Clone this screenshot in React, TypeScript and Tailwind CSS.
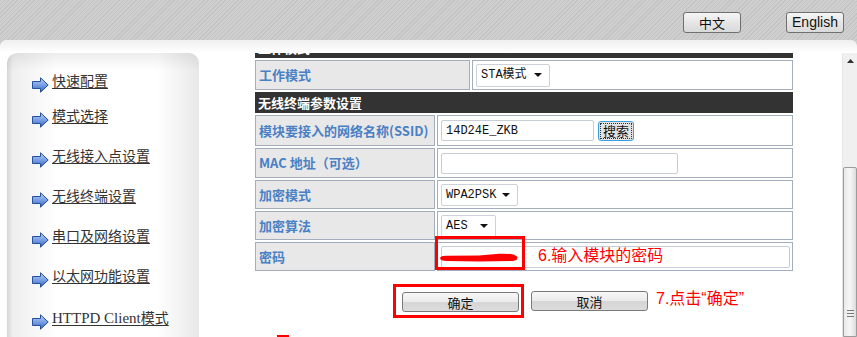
import type { ReactNode } from 'react'

const menu = [
  { label: '快速配置', cls: 'mt-[19px]' },
  { label: '模式选择', cls: 'mt-[19px]' },
  { label: '无线接入点设置', cls: 'mt-[24px]' },
  { label: '无线终端设置', cls: 'mt-[24px]' },
  { label: '串口及网络设置', cls: 'mt-[24px]' },
  { label: '以太网功能设置', cls: 'mt-[24px]' },
]

function Arrow() {
  return (
    <svg width="17" height="16" viewBox="0 0 17 16" className="mt-[5px] shrink-0">
      <defs>
        <linearGradient id="arrowFill" x1="0" y1="0" x2="0" y2="1">
          <stop offset="0" stopColor="#b9d0f5" />
          <stop offset="0.5" stopColor="#7aa0e3" />
          <stop offset="1" stopColor="#3563c2" />
        </linearGradient>
      </defs>
      <path d="M0.5 4.5H8.5V0.8L16.2 8L8.5 15.2V11.5H0.5Z" fill="url(#arrowFill)" stroke="#24509f" />
    </svg>
  )
}

function TopButton({ className, children }: { className: string; children: ReactNode }) {
  return (
    <div
      className={`flex h-[21px] items-center justify-center rounded-[3px] border border-[#707070] bg-[image:linear-gradient(to_bottom,#f5f5f5,#e6e6e6_50%,#d9d9d9)] text-[#111] ${className}`}
    >
      {children}
    </div>
  )
}

function Header({ children }: { children: ReactNode }) {
  return (
    <div className="flex h-[21px] shrink-0 items-center bg-[#333333] pl-[3px] text-[13px] font-bold text-white">
      {children}
    </div>
  )
}

function Row({ label, labelW, h, children }: { label: string; labelW: string; h: string; children: ReactNode }) {
  return (
    <div className={`flex shrink-0 gap-[2px] ${h}`}>
      <div
        className={`flex shrink-0 items-center border border-[#a3aebd] bg-[#e8e8e8] pl-[3px] text-[13px] font-bold text-[#4a80c4] ${labelW}`}
      >
        {label}
      </div>
      <div className="flex flex-1 items-center border border-[#a3aebd] bg-white pl-[3px]">{children}</div>
    </div>
  )
}

function Select({ value, w, h }: { value: string; w: string; h: string }) {
  return (
    <div
      className={`flex items-center justify-between rounded-[2px] border border-[#cdd2d8] bg-white pl-[4px] pr-[7px] font-['Liberation_Mono','Noto_Sans_CJK_SC',monospace] text-[12px] text-[#111] ${w} ${h}`}
    >
      <span>{value}</span>
      <svg width="8" height="4" viewBox="0 0 8 4">
        <path d="M0 0H8L4 4Z" fill="#111" />
      </svg>
    </div>
  )
}

function Input({ value, w, h }: { value?: string; w: string; h: string }) {
  return (
    <div
      className={`flex items-center rounded-[2px] border border-[#c6cdd7] bg-white pl-[4px] font-['Liberation_Mono','Noto_Sans_CJK_SC',monospace] text-[12px] text-[#111] ${w} ${h}`}
    >
      {value}
    </div>
  )
}

function Btn({ className, children }: { className?: string; children: ReactNode }) {
  return (
    <div
      className={`flex h-[20px] w-[117px] items-center justify-center rounded-[3px] border border-[#7a7a7a] bg-[image:linear-gradient(to_bottom,#f7f7f7,#ebebeb_50%,#d6d6d6_52%,#dcdcdc)] text-[13px] leading-none text-[#111] ${className ?? ''}`}
    >
      {children}
    </div>
  )
}

export default function App() {
  return (
    <div className="h-[337px] w-[857px] overflow-hidden bg-[#c9c9c9] bg-[image:repeating-linear-gradient(135deg,#c3c3c3_0px,#c3c3c3_1px,#cfcfcf_1px,#cfcfcf_3px)] font-['Noto_Sans_CJK_SC',sans-serif] text-[#222]">
      <div className="flex h-[40px] items-start justify-end pt-[12px]">
        <TopButton className="w-[58px] text-[13px]">中文</TopButton>
        <TopButton className="ml-[45px] mr-[13px] w-[58px] font-['Liberation_Sans'] text-[14px]">English</TopButton>
      </div>

      <div className="flex h-[297px] rounded-t-[6px] bg-white bg-[image:linear-gradient(to_bottom,#efefef,#ffffff_13px)]">
        <aside className="ml-[7px] mt-[13px] flex w-[192px] flex-col rounded-t-[10px] bg-[image:linear-gradient(to_bottom,rgba(0,0,0,0.07),rgba(0,0,0,0)_18px),linear-gradient(to_right,#d6d6d6,#efefef_6px,#ffffff_50px,#ffffff_150px,#e8e8e8)] pl-[25px]">
          {menu.map((m) => (
            <div key={m.label} className={`flex h-[16px] items-start gap-[3px] ${m.cls}`}>
              <Arrow />
              <span className="text-[14px] leading-[16px] text-[#333] underline underline-offset-2">{m.label}</span>
            </div>
          ))}
          <div className="mt-[26px] flex h-[16px] items-start gap-[3px]">
            <Arrow />
            <span className="text-[14px] leading-[16px] text-[#333] underline underline-offset-2">
              <span className="font-['Liberation_Serif'] text-[15px]">HTTPD Client</span>模式
            </span>
          </div>
        </aside>

        <main className="relative ml-[56px] mt-[13px] w-[538px] overflow-hidden">
          <div className="-mt-[16px] flex flex-col gap-[2px]">
            <Header>工作模式</Header>
            <Row label="工作模式" labelW="w-[215px]" h="h-[30px]">
              <Select value="STA模式" w="w-[74px]" h="h-[23px]" />
            </Row>
            <Header>无线终端参数设置</Header>
            <Row label="模块要接入的网络名称(SSID)" labelW="w-[180px]" h="h-[31px]">
              <Input value="14D24E_ZKB" w="w-[153px]" h="h-[21px]" />
              <div className="ml-[4px] flex h-[20px] w-[36px] items-center justify-center rounded-[3px] border border-[#3aa0dc] bg-[#e2e2e2] p-[1px]">
                <span className="flex h-full w-full items-center justify-center border border-dotted border-[#333] text-[13px] leading-none text-[#111]">
                  搜索
                </span>
              </div>
            </Row>
            <Row label="MAC 地址（可选）" labelW="w-[180px]" h="h-[30px]">
              <Input w="w-[237px]" h="h-[21px]" />
            </Row>
            <Row label="加密模式" labelW="w-[180px]" h="h-[29px]">
              <Select value="WPA2PSK" w="w-[77px]" h="h-[22px]" />
            </Row>
            <Row label="加密算法" labelW="w-[180px]" h="h-[29px]">
              <Select value="AES" w="w-[55px]" h="h-[22px]" />
            </Row>
            <Row label="密码" labelW="w-[180px]" h="h-[29px]">
              <Input w="w-[349px]" h="h-[22px]" />
            </Row>
          </div>

          <div className="mt-[13px] flex items-center pl-[138px]">
            <div className="border-[3px] border-[#ff0000] pb-[3px] pl-[6px] pr-[2px] pt-[5px]">
              <Btn>确定</Btn>
            </div>
            <Btn className="ml-[7px]">取消</Btn>
            <span className="-mt-[4px] ml-[8px] font-['Liberation_Sans','Noto_Sans_CJK_SC',sans-serif] text-[16px] leading-[20px] text-[#ff0000]">
              7.点击“确定”
            </span>
          </div>

          <div className="absolute left-[180px] top-[183px] h-[34px] w-[90px] border-[3px] border-[#ff0000]" />
          <svg width="80" height="14" viewBox="0 0 80 14" className="absolute left-[184px] top-[197px]">
            <path
              d="M1 8 Q2 5.5 8 5.8 L40 5.5 L60 3.8 Q75 3.2 78 6.5 Q79.5 10.5 74 11 L40 11.5 L8 11 Q1 11 1 8Z"
              fill="#ff0000"
            />
          </svg>
          <span className="absolute left-[283px] top-[193px] font-['Liberation_Sans','Noto_Sans_CJK_SC',sans-serif] text-[16px] leading-[20px] text-[#ff0000]">
            6.输入模块的密码
          </span>
          <div className="absolute left-[22px] top-[282px] h-[2px] w-[12px] bg-[#ff0000]" />
        </main>

        <div className="ml-[49px] mt-[13px] flex w-[15px] flex-col border-l border-[#e6e6e6] bg-[#f0f0f0]">
          <div className="flex h-[16px] shrink-0 items-center justify-center">
            <svg width="7" height="4" viewBox="0 0 7 4">
              <path d="M0 4L3.5 0L7 4Z" fill="#333" />
            </svg>
          </div>
          <div className="h-[98px] shrink-0" />
          <div className="flex flex-1 flex-col items-center rounded-t-[2px] border border-[#9c9c9c] bg-[image:linear-gradient(to_right,#e9e9e9,#f7f7f7_50%,#dcdcdc)]">
            <div className="mt-[142px] flex flex-col gap-[2px]">
              <div className="h-[1px] w-[7px] bg-[#777]" />
              <div className="h-[1px] w-[7px] bg-[#777]" />
              <div className="h-[1px] w-[7px] bg-[#777]" />
            </div>
          </div>
        </div>
      </div>
    </div>
  )
}
